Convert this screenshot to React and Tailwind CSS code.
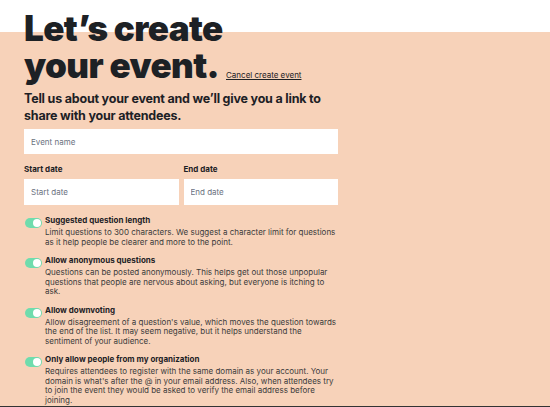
const options = [
  {
    title: 'Suggested question length',
    text: 'Limit questions to 300 characters. We suggest a character limit for questions as it help people be clearer and more to the point.',
  },
  {
    title: 'Allow anonymous questions',
    text: 'Questions can be posted anonymously. This helps get out those unpopular questions that people are nervous about asking, but everyone is itching to ask.',
  },
  {
    title: 'Allow downvoting',
    text: "Allow disagreement of a question's value, which moves the question towards the end of the list. It may seem negative, but it helps understand the sentiment of your audience.",
  },
  {
    title: 'Only allow people from my organization',
    text: "Requires attendees to register with the same domain as your account. Your domain is what's after the @ in your email address. Also, when attendees try to join the event they would be asked to verify the email address before joining.",
  },
]

function Toggle() {
  return (
    <span className="relative mt-[3px] block h-[10px] w-[17px] shrink-0 rounded-full bg-[#6fdcad]">
      <span className="absolute right-[1px] top-[1px] h-[8px] w-[8px] rounded-full bg-white" />
    </span>
  )
}

export default function App() {
  return (
    <div className="h-[407px] overflow-hidden border-b border-[#333] bg-[linear-gradient(to_bottom,#ffffff_32px,#f7d2b9_32px)] font-['Inter',sans-serif] text-[#1d2125]">
      <div className="box-content w-[314px] pl-[24px] pt-[10px]">
        <h1 className="text-[35px] font-black leading-[37px] tracking-[-0.6px]">
          Let’s create
          <br />
          your event.
          <a href="#" className="ml-[7px] align-baseline text-[8px] font-normal leading-none tracking-normal underline">
            Cancel create event
          </a>
        </h1>

        <p className="mt-[6px] text-[12.5px] font-bold leading-[17px] tracking-[-0.2px]">
          Tell us about your event and we’ll give you a link to share with your attendees.
        </p>

        <input
          type="text"
          placeholder="Event name"
          className="mt-[5px] block h-[25px] w-full bg-white px-[7px] text-[8px] outline-none placeholder:text-[#6b7280]"
        />

        <div className="mt-[10px] grid grid-cols-2 gap-[5px]">
          <label className="block">
            <span className="block text-[8px] font-bold leading-[10px]">Start date</span>
            <input
              type="text"
              placeholder="Start date"
              className="mt-[5px] block h-[26px] w-full bg-white px-[7px] text-[8px] outline-none placeholder:text-[#6b7280]"
            />
          </label>
          <label className="block">
            <span className="block text-[8px] font-bold leading-[10px]">End date</span>
            <input
              type="text"
              placeholder="End date"
              className="mt-[5px] block h-[26px] w-full bg-white px-[7px] text-[8px] outline-none placeholder:text-[#6b7280]"
            />
          </label>
        </div>

        <div className="mt-[10px] flex flex-col gap-[8px]">
          {options.map((option) => (
            <div key={option.title} className="flex gap-[3px] pl-[1px]">
              <Toggle />
              <div>
                <div className="text-[8px] font-bold leading-[11px]">{option.title}</div>
                <p className="mt-[2px] text-[8px] leading-[9.5px] text-[#3b3b3b]">{option.text}</p>
              </div>
            </div>
          ))}
        </div>
      </div>
    </div>
  )
}
